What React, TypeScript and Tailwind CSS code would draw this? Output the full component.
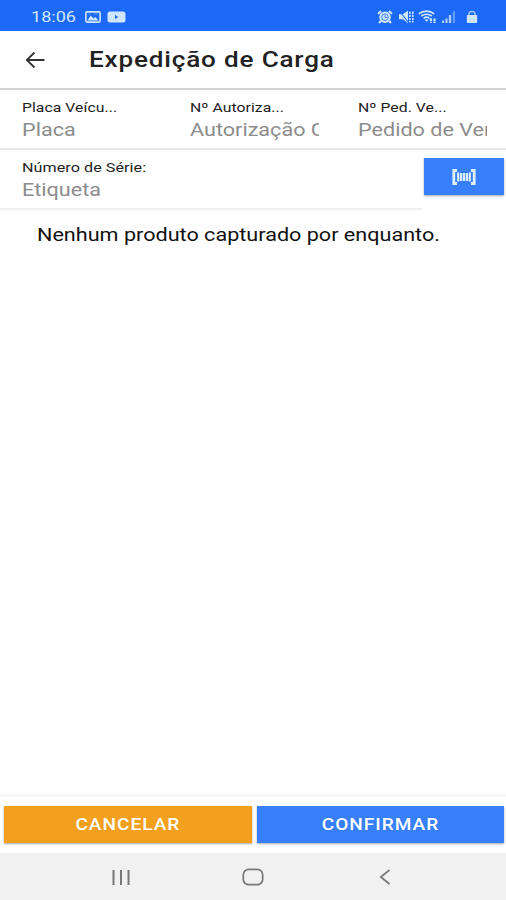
import type { ReactNode } from "react";

function Wide({ className, children }: { className: string; children: ReactNode }) {
  return <span className={`block w-max whitespace-nowrap ${className}`}>{children}</span>;
}

function StatusBar() {
  return (
    <header className="flex h-[31px] shrink-0 items-center bg-[#1b69f6] pl-[31px] pr-[28px] pt-[2px] text-[#cfe6ff]">
      <div className="w-[54px] text-[14px] leading-4">
        <Wide className="origin-left scale-x-[1.29]">18:06</Wide>
      </div>
      <svg className="h-3 w-4" viewBox="0 0 16 12" fill="none" stroke="currentColor">
        <rect x="0.9" y="0.9" width="14.2" height="10.2" rx="1" strokeWidth="1.6" />
        <path d="M2.5 9.5 5.8 4.6l2.7 3 1.8-1.6 3.2 3.5Z" fill="currentColor" stroke="none" />
        <path d="M4 3h2M9 3h4" strokeOpacity=".35" />
      </svg>
      <svg className="ml-[6px] h-3 w-[19px]" viewBox="0 0 19 12">
        <rect x="0.5" y="0.5" width="18" height="11" rx="2.5" fill="currentColor" />
        <path d="M8 4v4l3.4-2Z" fill="#1b69f6" />
      </svg>
      <div className="ml-auto flex items-center">
        <svg className="h-[14px] w-4" viewBox="0 0 16 14" fill="none">
          <circle cx="8" cy="7.2" r="5.8" fill="currentColor" />
          <path d="M1 3.8 4 1M15 3.8 12 1M3.7 11 2 13M12.3 11l1.7 2" stroke="currentColor" strokeWidth="2" />
          <circle cx="8" cy="7.2" r="3.3" stroke="#1b69f6" strokeWidth="1" strokeOpacity=".8" />
          <path d="M8 5.2v2.3h2" stroke="#1b69f6" strokeOpacity=".8" />
        </svg>
        <svg className="ml-[5px] h-[14px] w-4" viewBox="0 0 16 14" fill="none">
          <path d="M1 4.3h3.5L10 .8v12.4L5 9.3H1Z" fill="currentColor" />
          <path d="m1 .5 9.5 12" stroke="#1b69f6" strokeWidth="1.1" />
          <path d="M11.9 1.5v11M14.8 1.5v11" stroke="currentColor" strokeWidth="1.5" strokeDasharray="2.4 .8" />
        </svg>
        <svg className="ml-[4px] h-[14px] w-5" viewBox="0 0 20 14" fill="none" stroke="currentColor">
          <path d="M.8 3.8C5 .2 12 .2 16.2 3.8M3.2 6c3-2.3 7.6-2.3 10.6 0M5.6 8.3c1.8-1.4 4-1.4 5.8 0" strokeWidth="1.6" />
          <path d="M6.5 9.5h4.2l-2.1 2.3Z" fill="currentColor" stroke="none" />
          <path d="M12.9 8.3v4.5M16.5 8.5V13" strokeWidth="2.2" strokeDasharray="3 .6" />
        </svg>
        <svg className="ml-[4px] h-[14px] w-[14px]" viewBox="0 0 14 14" fill="currentColor">
          <path d="M0 10.5h2.2V13H0zM3.4 8.5h2.2V13H3.4zM6.8 5h2.4v8H6.8z" opacity=".8" />
          <path d="M10.8 1.5H13V13h-2.2z" opacity=".4" />
        </svg>
        <svg className="ml-[10px] h-[14px] w-3" viewBox="0 0 12 14" fill="none">
          <path d="M3 6V4a3 2.6 0 0 1 6 0v2" stroke="currentColor" strokeOpacity=".7" strokeWidth="1.5" />
          <rect x="0.8" y="5" width="10.4" height="8" rx="1" fill="currentColor" />
        </svg>
      </div>
    </header>
  );
}

function Field({
  label,
  placeholder,
  className,
  labelClass = "scale-x-[1.21]",
}: {
  label: string;
  placeholder: string;
  className: string;
  labelClass?: string;
}) {
  return (
    <div className={`flex flex-col ${className}`}>
      <div className="text-[13px] leading-4 tracking-[0.05px] text-[#222]">
        <Wide className={`origin-left ${labelClass}`}>{label}</Wide>
      </div>
      <div className="mt-[2px] w-[129px] overflow-hidden text-[18px] leading-6 text-[#8c8c8c]">
        <Wide className="origin-left scale-x-[1.2]">{placeholder}</Wide>
      </div>
    </div>
  );
}

export default function App() {
  return (
    <div className="flex h-[900px] w-[506px] flex-col overflow-hidden bg-white font-[Roboto,sans-serif] text-[#111]">
      <StatusBar />
      <div className="flex h-[59px] shrink-0 items-center border-b-2 border-[#d4d4d4] pl-[25px]">
        <svg className="h-[18px] w-5" viewBox="0 0 20 18" fill="none" stroke="#333" strokeWidth="1.8">
          <path d="M19.5 9H2M9.5 1.5 1.8 9l7.7 7.5" />
        </svg>
        <h1 className="ml-[44px] text-[22px] font-medium leading-7 tracking-[0.7px] text-[#222]">
          <Wide className="origin-left scale-x-[1.185]">Expedição de Carga</Wide>
        </h1>
      </div>
      <div className="flex h-[60px] shrink-0 border-b-2 border-[#e7e7e7] pl-[22px] pt-[10px]">
        <Field className="w-[168px]" label="Placa Veícu..." placeholder="Placa" />
        <Field className="w-[168px]" label="Nº Autoriza..." placeholder="Autorização C" />
        <Field className="w-[130px]" label="Nº Ped. Ve..." placeholder="Pedido de Ven" />
      </div>
      <div className="flex h-[60px] shrink-0">
        <div className="w-[422px] border-b-2 border-[#f0f0f0] pl-[22px] pt-[10px]">
          <Field className="w-[180px]" label="Número de Série:" placeholder="Etiqueta" labelClass="scale-x-[1.24]" />
        </div>
        <button className="ml-[2px] mt-[8px] flex h-[37px] w-20 items-center justify-center bg-[#387ffc] shadow-[0_1px_2px_rgba(0,0,0,0.35)]">
          <svg className="h-4 w-6" viewBox="0 0 24 16" fill="none" stroke="#dcefff">
            <path d="M5 1.5H1.8v13H5M19 1.5h3.2v13H19" strokeWidth="2.8" />
            <path d="M6.2 3.5v9M9.1 4v8M12 4v8M14.9 4v8M17.8 3.5v9" strokeWidth="2.2" />
          </svg>
        </button>
      </div>
      <main className="flex-1 pl-[37px] pt-[13px] text-[18px] leading-6">
        <Wide className="origin-left scale-x-[1.2]">Nenhum produto capturado por enquanto.</Wide>
      </main>
      <div className="flex h-[59px] shrink-0 gap-[5px] border-t-[3px] border-[#f8f8f8] pl-1 pr-[2px] pt-[9px] text-[17px] font-medium tracking-[0.9px] text-white">
        <button className="flex h-[37px] w-[248px] items-center justify-center bg-[#f3a01e] shadow-[0_1px_2px_rgba(0,0,0,0.35)]">
          <Wide className="scale-x-[1.12]">CANCELAR</Wide>
        </button>
        <button className="flex h-[37px] w-[247px] items-center justify-center bg-[#387ffc] shadow-[0_1px_2px_rgba(0,0,0,0.35)]">
          <Wide className="scale-x-[1.12]">CONFIRMAR</Wide>
        </button>
      </div>
      <nav className="flex h-[47px] shrink-0 items-center bg-[#f1f1f1] pl-[111px] text-[#777]">
        <svg className="h-4 w-5" viewBox="0 0 20 16" fill="none" stroke="currentColor" strokeWidth="2">
          <path d="M2.5 1v15M10 1v15M17.5 1v15" />
        </svg>
        <svg className="ml-[111px] h-[18px] w-[22px]" viewBox="0 0 22 18" fill="none" stroke="currentColor" strokeWidth="1.7">
          <rect x="1.3" y="1.3" width="19.4" height="15.4" rx="5.5" />
        </svg>
        <svg className="ml-[115px] h-4 w-3" viewBox="0 0 12 16" fill="none" stroke="currentColor" strokeWidth="1.7">
          <path d="M10.5 1 1.8 8l8.7 7" />
        </svg>
      </nav>
    </div>
  );
}
